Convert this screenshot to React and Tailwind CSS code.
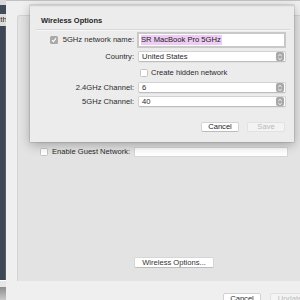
import React from "react";

function Stepper() {
  return (
    <div className="w-[8px] h-[9px] rounded-[2px] bg-[#a8a8a8] flex items-center justify-center">
      <svg width="6" height="8" viewBox="0 0 6 8">
        <path d="M1.2 3 L3 1.3 L4.8 3" fill="none" stroke="#fff" strokeWidth="0.9" />
        <path d="M1.2 5 L3 6.7 L4.8 5" fill="none" stroke="#fff" strokeWidth="0.9" />
      </svg>
    </div>
  );
}

function Popup({ value }) {
  return (
    <div className="h-[11px] w-[148px] bg-white border border-[#d2d2d2] border-b-[#bdbdbd] rounded-[2px] flex items-center justify-between pl-[3px] pr-[1px] shadow-[0_0.5px_0.5px_rgba(0,0,0,0.08)]">
      <span className="leading-none">{value}</span>
      <Stepper />
    </div>
  );
}

function Check({ checked }) {
  if (checked) {
    return (
      <div className="w-[8px] h-[8px] rounded-[1.5px] bg-[#a9a9a9] flex items-center justify-center">
        <svg width="6" height="6" viewBox="0 0 6 6">
          <path d="M1 3.2 L2.4 4.6 L5 1.2" fill="none" stroke="#fff" strokeWidth="1.1" />
        </svg>
      </div>
    );
  }
  return <div className="w-[8px] h-[8px] rounded-[1.5px] bg-white border border-[#c4c4c4]" />;
}

function Row({ label, children, className = "" }) {
  return (
    <div className={"flex items-center " + className}>
      <div className="w-[104px] flex justify-end items-center gap-[5px] pr-[0px]">{label}</div>
      <div className="ml-[4px] flex items-center">{children}</div>
    </div>
  );
}

export default function App() {
  return (
    <div className="w-[300px] h-[300px] flex overflow-hidden bg-[#ececec] text-[#2b2b2b] text-[7.6px] font-['Liberation_Sans','Helvetica',sans-serif]">
      {/* left dark column (other window) */}
      <div className="w-[6px] flex flex-col shrink-0">
        <div className="h-[5px] bg-[#d9d9d9]" />
        <div className="h-[9px] bg-[#434c58]" />
        <div className="h-[12px] bg-[#dcdcdc] flex items-center justify-end overflow-visible">
          <span className="text-[8px] text-[#222] leading-none mr-[-1px]">th</span>
        </div>
        <div className="h-[254px] bg-[#3e4855] border-r border-[#56606c]" />
        <div className="h-[7px] bg-[#e6e6e6] border-t border-white" />
        <div className="flex-1 bg-gradient-to-b from-[#8d8d8d] to-[#c9c9c9]" />
      </div>

      {/* main window */}
      <div className="relative flex-1 flex flex-col bg-[#efefef]">
        <div className="h-[5px] bg-gradient-to-b from-[#dadada] to-[#cdcdcd] border-b border-[#c2c2c2] overflow-hidden flex">
          <span className="ml-[130px] mt-[-6px] text-[#8a8a8a] leading-none">Wireless Security</span>
        </div>

        <div className="flex flex-col pl-[11px] pt-[14px]">
          <div className="h-[266px] bg-[#e3e3e3] border-l border-t border-[#d4d4d4] rounded-tl-[3px] flex flex-col">
            {/* guest network row */}
            <div className="mt-[131px] flex items-center h-[10px]">
              <div className="ml-[22px]">
                <Check />
              </div>
              <span className="ml-[4px] leading-none">Enable Guest Network:</span>
              <div className="ml-[4px] w-[154px] h-[10px] bg-white border border-[#d6d6d6]" />
            </div>
            {/* wireless options button */}
            <div className="mt-[100px] ml-[116px]">
              <div className="w-[80px] h-[11px] bg-white rounded-[2px] border border-[#d6d6d6] border-b-[#bcbcbc] flex items-center justify-center leading-none text-[#333]">
                Wireless Options...
              </div>
            </div>
          </div>
          {/* bottom buttons */}
          <div className="flex mt-[12px] ml-[206px] gap-[9px]">
            <div className="w-[38px] h-[11px] bg-white rounded-[2px] border border-[#d2d2d2] flex items-center justify-center leading-none">Cancel</div>
            <div className="w-[40px] h-[11px] bg-[#f4f4f4] rounded-[2px] border border-[#e0e0e0] flex items-center justify-center leading-none text-[#bbb]">Update</div>
          </div>
        </div>

        {/* sheet overlay */}
        <div className="absolute left-[24px] top-[5px] w-[264px] h-[137px] bg-[#ececec] shadow-[0_3px_10px_rgba(0,0,0,0.28),0_0_0_0.5px_rgba(0,0,0,0.18)] flex flex-col">
          <div className="h-[2px] bg-gradient-to-b from-[#c9c9c9] to-[#ececec]" />
          <div className="pl-[11px] pt-[8px] h-[20px] flex items-center font-bold text-[7.5px] text-[#1e1e1e]">
            Wireless Options
          </div>
          <div className="mt-[2px] ml-[6px] mr-[4px] h-[2px] border-t border-[#d8d8d8] border-b border-b-[#f6f6f6]" />

          <Row
            className="mt-[1px] h-[16px]"
            label={
              <>
                <Check checked />
                <span className="leading-none">5GHz network name:</span>
              </>
            }
          >
            <div className="w-[149px] h-[16px] bg-white border-2 border-[#c9c9c9] flex items-center pl-[2px] -ml-[1px]">
              <span className="bg-[#efccf4] leading-none py-[1px] pr-[1px] text-[#222]">SR MacBook Pro 5GHz</span>
            </div>
          </Row>

          <Row className="mt-[3px] h-[11px]" label={<span className="leading-none">Country:</span>}>
            <Popup value="United States" />
          </Row>

          <Row className="mt-[5px] h-[11px]" label={null}>
            <div className="ml-[2px] flex items-center gap-[3px]">
              <Check />
              <span className="leading-none">Create hidden network</span>
            </div>
          </Row>

          <Row className="mt-[4px] h-[11px]" label={<span className="leading-none">2.4GHz Channel:</span>}>
            <Popup value="6" />
          </Row>

          <Row className="mt-[3px] h-[11px]" label={<span className="leading-none">5GHz Channel:</span>}>
            <Popup value="40" />
          </Row>

          <div className="mt-[15px] flex justify-end gap-[8px] pr-[9px]">
            <div className="w-[38px] h-[10px] bg-white rounded-[2px] border border-[#d2d2d2] border-b-[#bcbcbc] flex items-center justify-center leading-none text-[#222]">
              Cancel
            </div>
            <div className="w-[38px] h-[10px] bg-[#f3f3f3] rounded-[2px] border border-[#e2e2e2] flex items-center justify-center leading-none text-[#b9b9b9]">
              Save
            </div>
          </div>
        </div>
      </div>
    </div>
  );
}
